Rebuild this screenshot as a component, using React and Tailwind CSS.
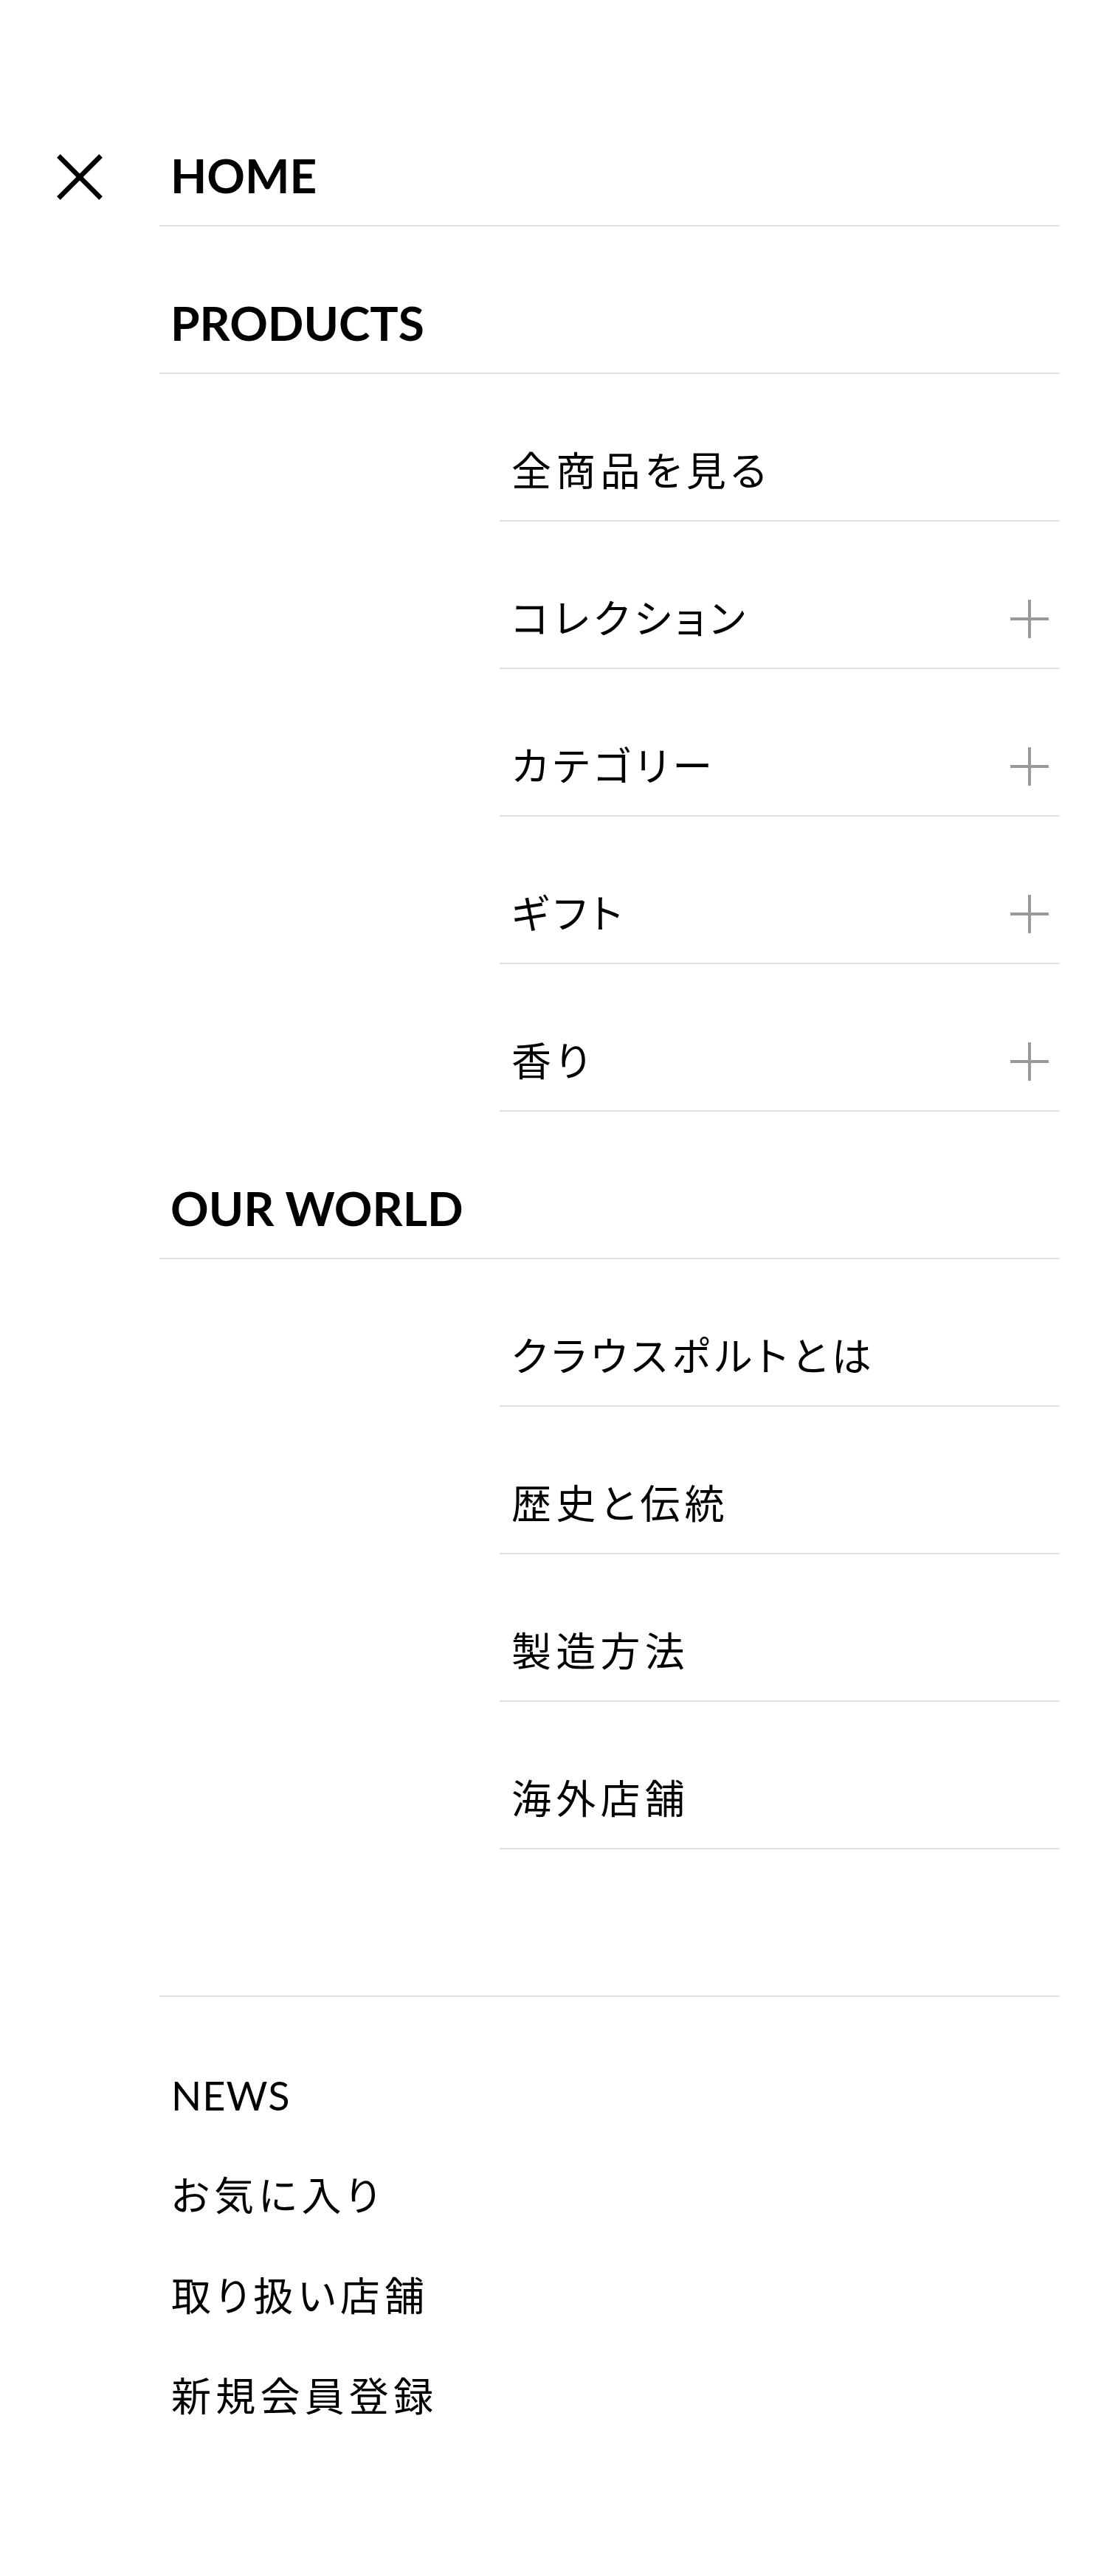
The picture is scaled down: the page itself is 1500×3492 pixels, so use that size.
import React from "react";

const products = [
  { label: "全商品を見る", plus: false },
  { label: "コレクション", plus: true },
  { label: "カテゴリー", plus: true },
  { label: "ギフト", plus: true },
  { label: "香り", plus: true },
];

const world = [
  { label: "クラウスポルトとは", plus: false },
  { label: "歴史と伝統", plus: false },
  { label: "製造方法", plus: false },
  { label: "海外店舗", plus: false },
];

const links = ["お気に入り", "取り扱い店舗", "新規会員登録"];

function CloseIcon() {
  return (
    <svg width="62" height="62" viewBox="0 0 62 62" aria-label="close">
      <line x1="2.4" y1="2.4" x2="59.6" y2="59.6" stroke="#000" strokeWidth="6.5" />
      <line x1="59.6" y1="2.4" x2="2.4" y2="59.6" stroke="#000" strokeWidth="6.5" />
    </svg>
  );
}

function PlusIcon() {
  return (
    <svg width="52" height="52" viewBox="0 0 52 52" aria-hidden="true">
      <rect x="24" y="0" width="4" height="52" fill="#999999" />
      <rect x="0" y="24" width="52" height="4" fill="#999999" />
    </svg>
  );
}

function Heading({ children }) {
  return (
    <div className="h-[200px] border-b-2 border-[#e2e2e2] flex items-end pl-[15px] pb-[35px]">
      <span className="text-[64px] leading-[64px] font-bold">{children}</span>
    </div>
  );
}

function SubList({ items }) {
  return (
    <ul className="ml-[461px]">
      {items.map((it) => (
        <li
          key={it.label}
          className="h-[200px] border-b-2 border-[#e2e2e2] flex items-end pl-[16px] pr-[15px] pb-[38px]"
        >
          <div className="flex w-full items-center justify-between">
            <span className="text-[54px] leading-[56px] tracking-[0.115em] [font-feature-settings:'palt']">
              {it.label}
            </span>
            {it.plus && <PlusIcon />}
          </div>
        </li>
      ))}
    </ul>
  );
}

export default function App() {
  return (
    <div className="min-h-[3492px] bg-white text-black font-['Lato','Noto_Sans_CJK_JP',sans-serif]">
      <div className="flex pt-[107px]">
        <div className="w-[216px] shrink-0 pl-[77px] pt-[102px]">
          <button type="button" className="block">
            <CloseIcon />
          </button>
        </div>
        <nav className="flex-1 mr-[64px]">
          <Heading>HOME</Heading>
          <Heading>PRODUCTS</Heading>
          <SubList items={products} />
          <Heading>OUR WORLD</Heading>
          <SubList items={world} />
          <div className="h-[200px] border-b-2 border-[#e2e2e2]" />
          <ul className="pt-[66px] pl-[16px]">
            <li className="text-[54px] leading-[136px] tracking-[0.02em]">NEWS</li>
            {links.map((l) => (
              <li
                key={l}
                className="text-[54px] leading-[136px] tracking-[0.115em] [font-feature-settings:'palt']"
              >
                {l}
              </li>
            ))}
          </ul>
        </nav>
      </div>
    </div>
  );
}
